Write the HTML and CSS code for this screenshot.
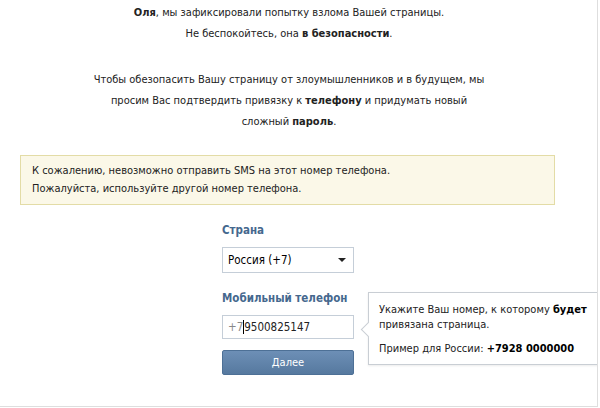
FILE: index.html
```html
<!DOCTYPE html>
<html>
<head>
    <meta charset="utf-8">
    <title>Защита страницы</title>
    <link rel="stylesheet" href="styles.css">
</head>
<body>

<div class="page">

    <div class="intro">
        <p><b>Оля</b>, мы зафиксировали попытку взлома Вашей страницы.<br>
        Не беспокойтесь, она <b>в безопасности</b>.</p>

        <p class="intro-second">Чтобы обезопасить Вашу страницу от злоумышленников и в будущем, мы<br>
        просим Вас подтвердить привязку к <b>телефону</b> и придумать новый<br>
        сложный <b>пароль</b>.</p>
    </div>

    <div class="warning">
        К сожалению, невозможно отправить SMS на этот номер телефона.<br>
        Пожалуйста, используйте другой номер телефона.
    </div>

    <form class="phone-form" action="#">
        <div class="field-label">Страна</div>
        <div class="select-box">
            <span>Россия (+7)</span>
            <span class="select-arrow"></span>
        </div>

        <div class="field-label phone-label">Мобильный телефон</div>
        <div class="phone-row">
            <div class="text-box"><span class="prefix">+7</span><span class="caret"></span>9500825147</div>

            <div class="hint">
                <div class="hint-arrow"></div>
                Укажите Ваш номер, к которому <b>будет</b><br>
                привязана страница.
                <div class="hint-example">Пример для России: <b>+7928 0000000</b></div>
            </div>
        </div>

        <div class="button">Далее</div>
    </form>

</div>

</body>
</html>
```

FILE: styles.css
```css
body {
    margin: 0;
    font-family: "DejaVu Sans Condensed", "DejaVu Sans", sans-serif;
    font-size: 11px;
    color: #222;
    background: #fff;
}

.page {
    width: 597px;
    height: 406px;
    border-right: 1px solid #dedede;
    border-bottom: 1px solid #dedede;
    overflow: hidden;
}

.intro {
    width: 578px;
    text-align: center;
    line-height: 21px;
    padding-top: 2px;
}

.intro p {
    margin: 0;
}

.intro-second {
    padding-top: 25px;
}

.warning {
    margin: 23px 0 0 20px;
    width: 511px;
    padding: 6px 11px;
    line-height: 18px;
    background: #fbf8e8;
    border: 1px solid #e3dca6;
}

.phone-form {
    margin: 17px 0 0 222px;
    width: 132px;
}

.field-label {
    color: #45688e;
    font-weight: bold;
    font-size: 11.5px;
    height: 17px;
    line-height: 17px;
}

.phone-label {
    margin-top: 17px;
}

.select-box {
    margin-top: 8px;
    height: 24px;
    border: 1px solid #c5ced8;
    display: flex;
    align-items: center;
    justify-content: space-between;
    padding: 0 7px 0 5px;
    color: #000;
    font-size: 11.5px;
}

.select-arrow {
    width: 0;
    height: 0;
    border-left: 4px solid transparent;
    border-right: 4px solid transparent;
    border-top: 4px solid #222;
}

.phone-row {
    position: relative;
    margin-top: 8px;
}

.text-box {
    height: 22px;
    line-height: 22px;
    border: 1px solid #c5ced8;
    padding: 0 5px;
    color: #222;
    font-size: 11.5px;
    display: flex;
    align-items: center;
}

.prefix {
    color: #888;
}

.caret {
    width: 1px;
    height: 14px;
    background: #000;
}

.hint {
    position: absolute;
    left: 146px;
    top: -23px;
    width: 220px;
    padding: 9px 0 8px 10px;
    background: #fff;
    border: 1px solid #c9ced4;
    line-height: 15px;
    color: #222;
    box-shadow: 0 1px 2px rgba(0, 0, 0, 0.08);
}

.hint b {
    color: #000;
}

.hint-arrow {
    position: absolute;
    left: -6px;
    top: 31px;
    width: 10px;
    height: 10px;
    background: #fff;
    border-left: 1px solid #c9ced4;
    border-bottom: 1px solid #c9ced4;
    transform: rotate(45deg);
}

.hint-example {
    margin-top: 9px;
}

.button {
    margin-top: 11px;
    height: 23px;
    line-height: 23px;
    text-align: center;
    color: #fff;
    background: linear-gradient(#6d8fb6, #56799f);
    border: 1px solid #4d7096;
    border-radius: 2px;
}
```
